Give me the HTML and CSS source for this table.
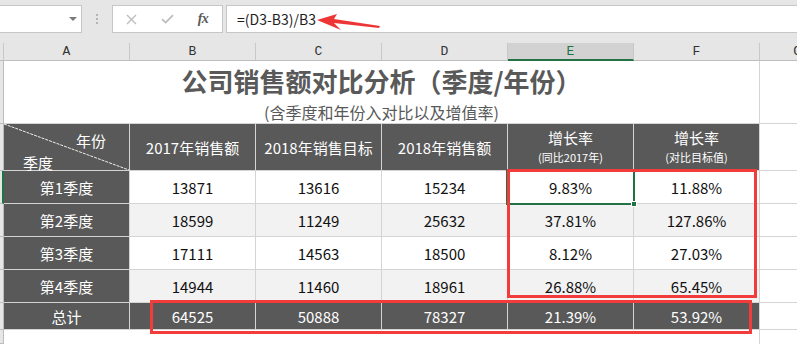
FILE: index.html
```html
<!DOCTYPE html>
<html lang="zh-CN">
<head>
<meta charset="utf-8">
<title>公司销售额对比分析</title>
<link rel="stylesheet" href="styles.css">
</head>
<body>
<div class="top">
  <div class="toolbar">
    <div class="namebox"><span class="caret"></span></div>
    <div class="grip"><i></i><i></i><i></i></div>
    <div class="fxbtns">
      <span class="slot"><svg width="11" height="11" viewBox="0 0 11 11"><path d="M1 1L10 10M10 1L1 10" stroke="#bdbdbd" stroke-width="1.4" fill="none"/></svg></span>
      <span class="slot"><svg width="13" height="10" viewBox="0 0 13 10"><path d="M1 5.2L4.6 8.6L12 1.2" stroke="#bdbdbd" stroke-width="1.8" fill="none"/></svg></span>
      <span class="slot fx">fx</span>
    </div>
    <div class="formula">
      <span class="ftext">=(D3-B3)/B3</span>
      <svg class="arrow" width="66" height="20" viewBox="0 0 66 20"><polygon points="0,7 20,1 17,6 63,13 62,15 17,10 24,17" fill="#ee3535"/></svg>
    </div>
  </div>
  <div class="colheads">
    <div class="ch corner"></div>
    <div class="ch">A</div>
    <div class="ch">B</div>
    <div class="ch">C</div>
    <div class="ch">D</div>
    <div class="ch sel-col">E</div>
    <div class="ch">F</div>
    <div class="ch last"><span class="gl">G</span></div>
  </div>
</div>

<div class="sheet">
  <!-- title row -->
  <div class="rh"></div>
  <div class="c title">
    <div class="t1">公司销售额对比分析（季度/年份）</div>
    <div class="t2">(含季度和年份入对比以及增值率)</div>
  </div>
  <div class="c gcol"></div>

  <!-- header row -->
  <div class="rh"></div>
  <div class="c d diag">
    <svg class="diagline" viewBox="0 0 125 46" preserveAspectRatio="none"><line x1="0" y1="0" x2="125" y2="46" stroke="#f0f0f0" stroke-width="1" stroke-dasharray="3 1"/></svg>
    <span class="yr">年份</span>
    <span class="qt">季度</span>
  </div>
  <div class="c d">2017年销售额</div>
  <div class="c d">2018年销售目标</div>
  <div class="c d">2018年销售额</div>
  <div class="c d two"><span>增长率</span><small>(同比2017年)</small></div>
  <div class="c d two"><span>增长率</span><small>(对比目标值)</small></div>
  <div class="c gcol"></div>

  <!-- row 1 -->
  <div class="rh act"></div>
  <div class="c d">第1季度</div>
  <div class="c">13871</div>
  <div class="c">13616</div>
  <div class="c">15234</div>
  <div class="c">9.83%</div>
  <div class="c">11.88%</div>
  <div class="c gcol"></div>

  <!-- row 2 -->
  <div class="rh"></div>
  <div class="c d">第2季度</div>
  <div class="c g">18599</div>
  <div class="c g">11249</div>
  <div class="c g">25632</div>
  <div class="c g">37.81%</div>
  <div class="c g">127.86%</div>
  <div class="c gcol"></div>

  <!-- row 3 -->
  <div class="rh"></div>
  <div class="c d">第3季度</div>
  <div class="c">17111</div>
  <div class="c">14563</div>
  <div class="c">18500</div>
  <div class="c">8.12%</div>
  <div class="c">27.03%</div>
  <div class="c gcol"></div>

  <!-- row 4 -->
  <div class="rh"></div>
  <div class="c d">第4季度</div>
  <div class="c g">14944</div>
  <div class="c g">11460</div>
  <div class="c g">18961</div>
  <div class="c g">26.88%</div>
  <div class="c g">65.45%</div>
  <div class="c gcol"></div>

  <!-- total -->
  <div class="rh"></div>
  <div class="c d">总计</div>
  <div class="c d">64525</div>
  <div class="c d">50888</div>
  <div class="c d">78327</div>
  <div class="c d">21.39%</div>
  <div class="c d">53.92%</div>
  <div class="c gcol"></div>

  <!-- empty row -->
  <div class="rh"></div>
  <div class="e"></div>
  <div class="e"></div>
  <div class="e"></div>
  <div class="e"></div>
  <div class="e"></div>
  <div class="e fr"></div>
  <div class="e"></div>
</div>

<div class="selection"><span class="handle"></span></div>
<div class="redbox box1"></div>
<div class="redbox box2"></div>
</body>
</html>
```

FILE: styles.css
```css
* { box-sizing: border-box; }

body {
  margin: 0;
  width: 797px;
  height: 344px;
  overflow: hidden;
  background: #fff;
  position: relative;
  font-family: "Noto Sans CJK SC", "Microsoft YaHei", sans-serif;
}

.top {
  background: #e6e6e6;
}

.toolbar {
  height: 33px;
  padding-top: 5px;
  display: flex;
  align-items: flex-start;
}

.namebox {
  margin-left: -1px;
  width: 83px;
  height: 28px;
  background: #fff;
  border: 1px solid #c6c6c6;
  display: flex;
  align-items: center;
  justify-content: flex-end;
  padding-right: 4px;
}

.caret {
  width: 0;
  height: 0;
  border-left: 4px solid transparent;
  border-right: 4px solid transparent;
  border-top: 4px solid #7a7a7a;
}

.grip {
  width: 30px;
  height: 28px;
  display: flex;
  flex-direction: column;
  align-items: center;
  justify-content: center;
  gap: 2px;
}

.grip i {
  display: block;
  width: 2px;
  height: 2px;
  background: #b4b4b4;
}

.fxbtns {
  width: 111px;
  height: 28px;
  background: #fff;
  border: 1px solid #c6c6c6;
  display: flex;
  align-items: center;
}

.slot {
  width: 36px;
  height: 26px;
  display: flex;
  align-items: center;
  justify-content: center;
}

.fx {
  font-family: "Liberation Serif", serif;
  font-style: italic;
  font-weight: bold;
  font-size: 14px;
  color: #5a5a5a;
  letter-spacing: -0.5px;
}

.formula {
  margin-left: 3px;
  flex: 1;
  margin-right: -6px;
  height: 28px;
  background: #fff;
  border: 1px solid #c6c6c6;
  padding-left: 10px;
  display: flex;
  align-items: center;
  position: relative;
}

.ftext {
  font-size: 14px;
  color: #1e1e1e;
  line-height: 20px;
}

.arrow {
  position: absolute;
  left: 90px;
  top: 7px;
}

.colheads {
  margin-top: 10px;
  display: grid;
  grid-template-columns: 4px repeat(6, 126px) 1fr;
  height: 18px;
}

.ch {
  height: 18px;
  border-right: 1px solid #c8c8c8;
  border-bottom: 1px solid #bdbdbd;
  font-family: "Liberation Mono", monospace;
  font-size: 13px;
  line-height: 17px;
  color: #333;
  text-align: center;
}

.ch.sel-col {
  background: #d2d2d2;
  color: #217346;
  border-bottom: 2px solid #217346;
}

.ch.last {
  border-right: none;
  text-align: right;
  padding-right: 0;
  overflow: hidden;
}

.ch .gl {
  display: inline-block;
  margin-right: -4px;
}

.sheet {
  display: grid;
  grid-template-columns: 4px repeat(6, 126px) 1fr;
  grid-template-rows: 63px 47px 33px 33px 33px 33px 27px 1fr;
  height: 283px;
}

.rh {
  background: #e6e6e6;
  border-right: 1px solid #bdbdbd;
  border-bottom: 1px solid #bdbdbd;
}

.rh.act {
  border-right: 2px solid #217346;
}

.c {
  border-right: 1px solid #d4d4d4;
  border-bottom: 1px solid #d4d4d4;
  display: flex;
  align-items: center;
  justify-content: center;
  font-size: 15px;
  color: #111;
}

.c.d {
  background: #595959;
  color: #fff;
}

.c.g {
  background: #f2f2f2;
}

.c.gcol {
  border-right: none;
}

.title {
  grid-column: 2 / 8;
  flex-direction: column;
  justify-content: flex-start;
  padding-top: 5px;
  color: #595959;
}

.t1 {
  font-size: 26px;
  font-weight: 700;
  line-height: 30px;
}

.t2 {
  margin-top: 6px;
  font-size: 16px;
  line-height: 20px;
}

.diag {
  position: relative;
  flex-direction: column;
  align-items: stretch;
  justify-content: space-between;
  padding: 10px 23px 0 19px;
}

.diagline {
  position: absolute;
  left: 0;
  top: 0;
  width: 100%;
  height: 100%;
}

.diag span {
  line-height: 14px;
  position: relative;
}

.diag .yr { align-self: flex-end; }
.diag .qt { align-self: flex-start; }

.two {
  flex-direction: column;
  justify-content: flex-start;
  padding-top: 4px;
}

.two span {
  line-height: 20px;
}

.two small {
  font-size: 11px;
  line-height: 18px;
}

.e.fr {
  border-right: 1px solid #d4d4d4;
}

.selection {
  position: absolute;
  left: 506px;
  top: 169px;
  width: 129px;
  height: 36px;
  border: 2px solid #217346;
}

.handle {
  position: absolute;
  right: -4px;
  bottom: -4px;
  width: 6px;
  height: 6px;
  background: #217346;
  border: 1px solid #fff;
}

.redbox {
  position: absolute;
  border: 3px solid #f23b3b;
}

.box1 {
  left: 507px;
  top: 169px;
  width: 250px;
  height: 129px;
}

.box2 {
  left: 150px;
  top: 300px;
  width: 602px;
  height: 34px;
}
```
